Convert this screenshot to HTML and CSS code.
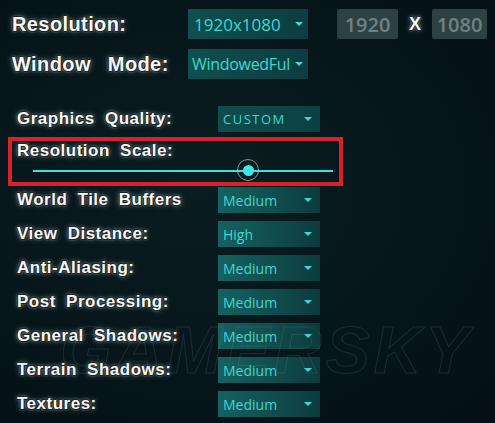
FILE: index.html
```html
<!DOCTYPE html>
<html>
<head>
    <meta charset="UTF-8">
    <title>Video Settings</title>
    <link rel="stylesheet" href="styles.css">
</head>
<body>
    <div class="panel">
        <div class="top">
            <div class="top-row">
                <span class="label big">Resolution:</span>
                <div class="select wide">1920x1080<i class="arrow"></i></div>
                <div class="dims">
                    <div class="dim">1920</div>
                    <span class="times">X</span>
                    <div class="dim">1080</div>
                </div>
            </div>
            <div class="top-row">
                <span class="label big">Window Mode:</span>
                <div class="select wide tight">WindowedFul<i class="arrow"></i></div>
            </div>
        </div>

        <div class="settings">
            <div class="setting">
                <span class="label">Graphics Quality:</span>
                <div class="select flat caps">CUSTOM<i class="arrow"></i></div>
            </div>
            <!-- 红框: 分辨率缩放 -->
            <div class="scale-box">
                <span class="label">Resolution Scale:</span>
                <div class="slider">
                    <div class="knob"><span class="dot"></span></div>
                </div>
            </div>
            <div class="list">
                <div class="setting">
                    <span class="label">World Tile Buffers</span>
                    <div class="select">Medium<i class="arrow"></i></div>
                </div>
                <div class="setting">
                    <span class="label">View Distance:</span>
                    <div class="select">High<i class="arrow"></i></div>
                </div>
                <div class="setting">
                    <span class="label">Anti-Aliasing:</span>
                    <div class="select">Medium<i class="arrow"></i></div>
                </div>
                <div class="setting">
                    <span class="label">Post Processing:</span>
                    <div class="select">Medium<i class="arrow"></i></div>
                </div>
                <div class="setting">
                    <span class="label">General Shadows:</span>
                    <div class="select">Medium<i class="arrow"></i></div>
                </div>
                <div class="setting">
                    <span class="label">Terrain Shadows:</span>
                    <div class="select">Medium<i class="arrow"></i></div>
                </div>
                <div class="setting">
                    <span class="label">Textures:</span>
                    <div class="select">Medium<i class="arrow"></i></div>
                </div>
            </div>
        </div>
        <div class="watermark" aria-hidden="true">GAMERSKY</div>
    </div>
</body>
</html>
```

FILE: styles.css
```css
body {
    margin: 0;
    background-color: #061519;
    font-family: 'Open Sans', 'Noto Sans', sans-serif;
}
.panel {
    position: relative;
    width: 495px;
    height: 423px;
    overflow: hidden;
    box-sizing: border-box;
    padding: 9px 0 0 0;
    background: radial-gradient(ellipse at 40% 45%, #0a1d21 0%, #061519 60%, #041013 100%);
}

/* 白色描边发光字 */
.label {
    color: #f6f8f8;
    font-family: 'Liberation Sans', 'DejaVu Sans', sans-serif;
    font-weight: bold;
    font-size: 17px;
    letter-spacing: 0.5px;
    word-spacing: 5px;
    white-space: nowrap;
    text-shadow: 1px 0 0 #1b2426, -1px 0 0 #1b2426, 0 1px 0 #1b2426, 0 -1px 0 #1b2426,
                 1px 1px 0 #1b2426, -1px -1px 0 #1b2426,
                 0 0 3px rgba(220, 228, 228, 0.9), 0 0 6px rgba(190, 200, 200, 0.6);
}
.label.big {
    font-size: 20px;
    letter-spacing: 0.4px;
    word-spacing: 11px;
}

.top {
    display: flex;
    flex-direction: column;
    gap: 10px;
    padding-left: 12px;
}
.top-row {
    display: flex;
    align-items: center;
    height: 30px;
}
.top-row .label {
    width: 176px;
}

.select {
    position: relative;
    box-sizing: border-box;
    width: 102px;
    height: 26px;
    padding-left: 5px;
    display: flex;
    align-items: center;
    color: #3ed8d2;
    font-size: 14px;
    background: linear-gradient(to right, #156261, #0c3b3e);
}
.select.wide {
    width: 120px;
    height: 30px;
    padding-left: 6px;
    font-size: 17px;
    background: linear-gradient(to right, #104f50, #0c3d40);
}
.select.tight {
    padding-left: 4px;
    font-size: 16px;
    letter-spacing: -0.3px;
}
.select.flat {
    background: linear-gradient(to right, #0f4d4e, #0c4043);
}
.select.caps {
    letter-spacing: 1.5px;
    font-size: 13px;
}
.arrow {
    position: absolute;
    right: 8px;
    top: 50%;
    margin-top: -2px;
    width: 0;
    height: 0;
    border-left: 4px solid transparent;
    border-right: 4px solid transparent;
    border-top: 4px solid #3ed8d2;
}
.select.wide .arrow {
    right: 5px;
}

.dims {
    display: flex;
    align-items: center;
    margin-left: 29px;
}
.dim {
    width: 61px;
    height: 30px;
    display: flex;
    align-items: center;
    justify-content: center;
    background-color: #2d4143;
    border-radius: 2px;
    color: #6f8283;
    font-size: 20px;
    font-weight: 600;
}
.dim + .times + .dim {
    width: 55px;
}
.times {
    width: 34px;
    text-align: center;
    color: #f6f8f8;
    font-family: 'Liberation Sans', sans-serif;
    font-weight: bold;
    font-size: 18px;
    text-shadow: 1px 0 0 #1b2426, -1px 0 0 #1b2426, 0 1px 0 #1b2426, 0 -1px 0 #1b2426,
                 0 0 3px rgba(220, 228, 228, 0.9), 0 0 6px rgba(190, 200, 200, 0.6);
}

.settings {
    margin-top: 27px;
    padding-left: 17px;
}
.setting {
    display: flex;
    align-items: center;
    height: 26px;
}
.setting .label {
    width: 201px;
}

.scale-box {
    width: 335px;
    height: 49px;
    box-sizing: border-box;
    margin: 5px 0 1px -9px;
    padding: 0 0 0 5px;
    border: 4px solid #d7222b;
    display: flex;
    flex-direction: column;
}
.scale-box .label {
    line-height: 20px;
}
.slider {
    position: relative;
    margin: 9px 0 0 16px;
    width: 300px;
    height: 2px;
    background-color: #3fe0e2;
}
.knob {
    position: absolute;
    left: 204px;
    top: -11px;
    width: 22px;
    height: 22px;
    box-sizing: border-box;
    border: 1px solid rgba(170, 210, 210, 0.7);
    border-radius: 50%;
    display: flex;
    align-items: center;
    justify-content: center;
}
.dot {
    width: 11px;
    height: 11px;
    border-radius: 50%;
    background-color: #3fe6e8;
}

.list {
    display: flex;
    flex-direction: column;
    gap: 8px;
}

.watermark {
    position: absolute;
    left: 60px;
    top: 312px;
    font-family: 'Liberation Sans', sans-serif;
    font-weight: bold;
    font-style: italic;
    font-size: 66px;
    letter-spacing: 4px;
    color: transparent;
    -webkit-text-stroke: 1px rgba(120, 140, 140, 0.2);
    pointer-events: none;
}
```
